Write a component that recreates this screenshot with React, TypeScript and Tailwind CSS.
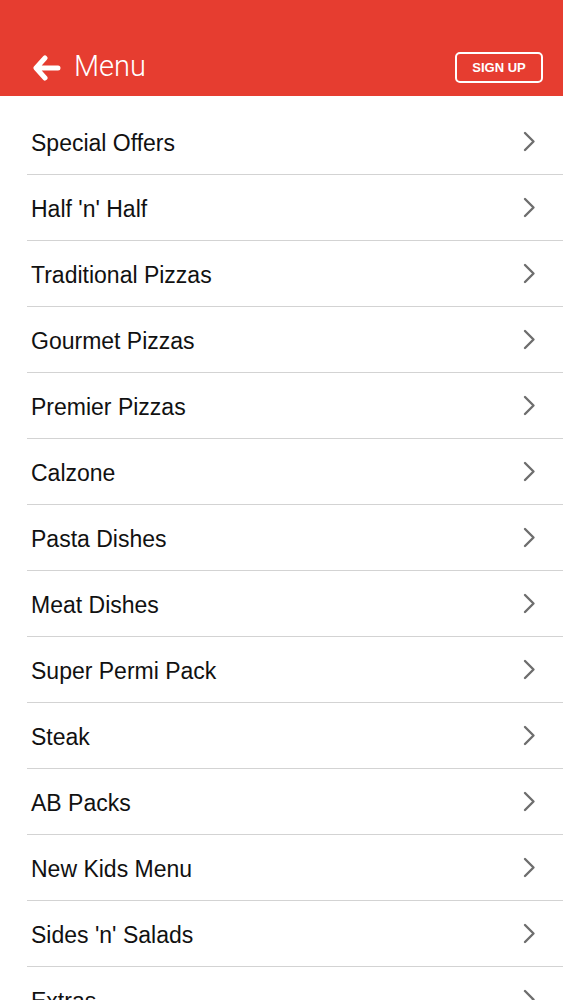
const items = [
  'Special Offers',
  "Half 'n' Half",
  'Traditional Pizzas',
  'Gourmet Pizzas',
  'Premier Pizzas',
  'Calzone',
  'Pasta Dishes',
  'Meat Dishes',
  'Super Permi Pack',
  'Steak',
  'AB Packs',
  'New Kids Menu',
  "Sides 'n' Salads",
  'Extras',
];

function BackArrow() {
  return (
    <svg width="28" height="26" viewBox="0 0 28 26" fill="none">
      <path
        d="M12 3 L3 13 L12 23 M4 13 H25"
        stroke="white"
        strokeWidth="5"
        strokeLinecap="round"
        strokeLinejoin="round"
      />
    </svg>
  );
}

function Chevron() {
  return (
    <svg width="13" height="21" viewBox="0 0 13 21" fill="none">
      <path d="M2 2 L10.5 10.5 L2 19" stroke="#6e6e6e" strokeWidth="2.4" strokeLinecap="round" strokeLinejoin="round" />
    </svg>
  );
}

export default function App() {
  return (
    <div className="w-[563px] h-[1000px] overflow-hidden bg-white font-['Liberation_Sans',Arial,sans-serif]">
      <header className="h-[96px] bg-[#e63d30] flex items-end justify-between pb-[13px] pl-[33px] pr-[20px]">
        <div className="flex items-center gap-[13px]">
          <BackArrow />
          <span className="text-white text-[29px] font-light leading-none font-['Roboto','Liberation_Sans',sans-serif] pb-[2px]">
            Menu
          </span>
        </div>
        <button className="w-[88px] h-[31px] border-2 border-white rounded-[5px] text-white text-[13px] font-bold leading-none">
          SIGN UP
        </button>
      </header>

      <ul className="pt-[13px] pl-[27px]">
        {items.map((name) => (
          <li
            key={name}
            className="h-[66px] border-b border-[#d3d3d3] flex items-center justify-between pl-[4px] pr-[27px]"
          >
            <span className="text-[23px] text-[#111] leading-none pt-[3px]">{name}</span>
            <Chevron />
          </li>
        ))}
      </ul>
    </div>
  );
}
